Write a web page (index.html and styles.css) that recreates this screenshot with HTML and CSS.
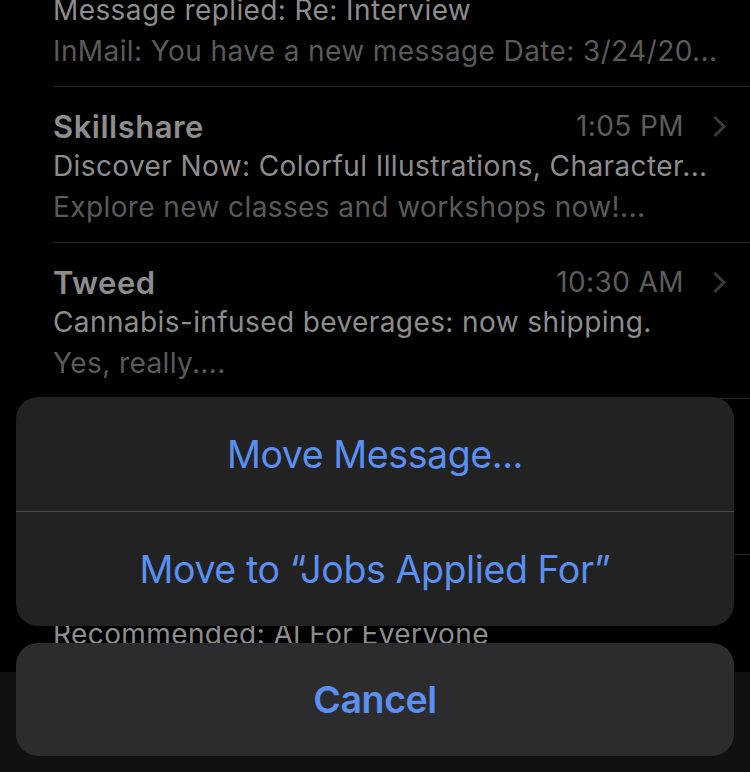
FILE: index.html
```html
<!DOCTYPE html>
<html lang="en">
  <head>
    <title>Mail</title>
    <meta charset="UTF-8" />
    <meta name="viewport" content="width=device-width, initial-scale=1" />
    <link rel="stylesheet" href="styles.css">
  </head>

  <body>
    <div class="screen">
      <ul class="mail-list">
        <li class="mail-row">
          <div class="mail-head">
            <span class="sender">LinkedIn</span>
            <span class="time">Yesterday</span>
            <span class="chevron"></span>
          </div>
          <div class="subject">Message replied: Re: Interview</div>
          <div class="preview">InMail: You have a new message Date: 3/24/20...</div>
        </li>
        <li class="mail-row">
          <div class="mail-head">
            <span class="sender">Skillshare</span>
            <span class="time">1:05 PM</span>
            <span class="chevron"></span>
          </div>
          <div class="subject">Discover Now: Colorful Illustrations, Character...</div>
          <div class="preview">Explore new classes and workshops now!...</div>
        </li>
        <li class="mail-row">
          <div class="mail-head">
            <span class="sender">Tweed</span>
            <span class="time">10:30 AM</span>
            <span class="chevron"></span>
          </div>
          <div class="subject">Cannabis-infused beverages: now shipping.</div>
          <div class="preview">Yes, really....</div>
        </li>
        <li class="mail-row">
          <div class="mail-head">
            <span class="sender">Coursera</span>
            <span class="time">9:12 AM</span>
            <span class="chevron"></span>
          </div>
          <div class="subject">Your weekly course digest</div>
          <div class="preview">New courses picked for you...</div>
        </li>
        <li class="mail-row">
          <div class="mail-head">
            <span class="sender">Coursera</span>
            <span class="time">8:40 AM</span>
            <span class="chevron"></span>
          </div>
          <div class="subject">Recommended: AI For Everyone</div>
          <div class="preview">Learn what AI can do...</div>
        </li>
      </ul>

      <div class="toolbar"></div>

      <!-- action sheet sits over the dimmed list -->
      <div class="action-sheet">
        <div class="action-group">
          <div class="action">Move Message...</div>
          <div class="action">Move to “Jobs Applied For”</div>
        </div>
        <div class="action-group">
          <div class="action cancel">Cancel</div>
        </div>
      </div>
    </div>
  </body>
</html>
```

FILE: styles.css
```css
body {
  margin: 0;
  background: #000;
  font-family: Inter, "Noto Sans", sans-serif;
  -webkit-font-smoothing: antialiased;
}

.screen {
  position: relative;
  width: 750px;
  height: 772px;
  overflow: hidden;
  background: #000;
  display: flex;
  flex-direction: column;
}

.mail-list {
  list-style: none;
  margin: -69px 0 0 0;
  padding: 0;
  flex: 1;
  overflow: hidden;
}

.mail-row {
  margin-left: 53px;
  padding: 19px 0 14px;
  border-bottom: 1px solid #262626;
  height: 122px;
}

.mail-head {
  display: flex;
  align-items: center;
  height: 40px;
}

.sender {
  flex: 1;
  color: #8d8d8d;
  font-size: 31px;
  font-weight: 600;
  letter-spacing: 0.5px;
}

.time {
  color: #5c5c5c;
  font-size: 28px;
  letter-spacing: 0.4px;
}

.chevron {
  width: 12px;
  height: 12px;
  margin: 0 27px 0 24px;
  border-top: 3px solid #3a3a3a;
  border-right: 3px solid #3a3a3a;
  transform: rotate(45deg);
}

.subject,
.preview {
  height: 41px;
  line-height: 41px;
  font-size: 28px;
  letter-spacing: 0.4px;
  white-space: nowrap;
}

.subject {
  color: #8d8d8d;
}

.preview {
  color: #5a5a5a;
}

.toolbar {
  height: 100px;
  background: #111;
}

.action-sheet {
  position: absolute;
  left: 16px;
  right: 16px;
  bottom: 16px;
  display: flex;
  flex-direction: column;
  gap: 17px;
}

.action-group {
  background: #222223;
  border-radius: 22px;
  overflow: hidden;
}

.action-group:last-child {
  background: #2c2c2e;
}

.action {
  height: 114px;
  display: flex;
  align-items: center;
  justify-content: center;
  color: #5b8ff0;
  font-size: 37.5px;
  letter-spacing: -0.4px;
}

.action + .action {
  border-top: 1px solid #4a4a4c;
}

.cancel {
  height: 113px;
  font-weight: 600;
}
```
